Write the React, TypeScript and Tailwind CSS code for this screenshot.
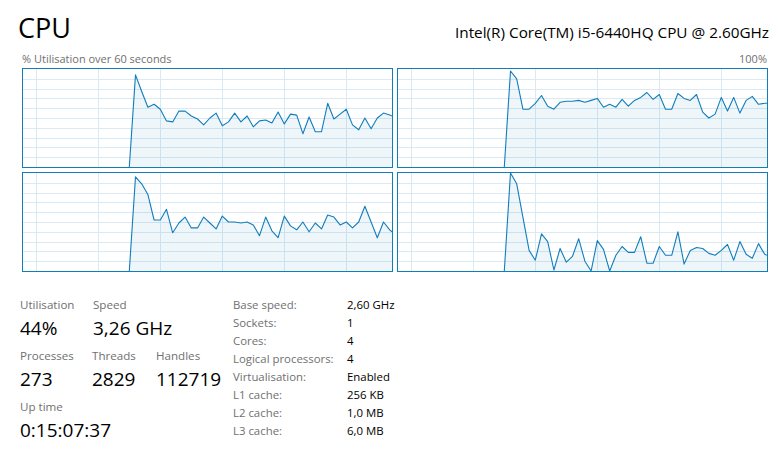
const CORES: number[][] = [
  [0, 94, 77, 61, 64, 59, 47, 46, 57, 57, 52, 49, 43, 50, 55, 42, 46, 55, 46, 52, 41, 47, 48, 45, 56, 44, 54, 53, 34, 51, 36, 36, 65, 49, 54, 59, 43, 38, 50, 39, 50, 55, 53, 52],
  [0, 98, 90, 59, 59, 65, 73, 62, 59, 66, 67, 67, 68, 66, 68, 70, 61, 64, 61, 69, 62, 68, 71, 76, 69, 74, 59, 59, 75, 70, 68, 74, 56, 50, 54, 71, 57, 71, 55, 68, 72, 64, 65, 65],
  [0, 96, 89, 78, 52, 52, 63, 39, 49, 55, 44, 44, 55, 49, 43, 56, 50, 50, 49, 50, 47, 36, 55, 41, 34, 56, 46, 42, 50, 40, 49, 43, 57, 55, 47, 50, 44, 50, 66, 50, 34, 50, 42, 40],
  [0, 100, 89, 55, 21, 11, 38, 30, 1, 23, 9, 15, 33, 10, 0, 31, 22, 0, 16, 25, 19, 19, 35, 8, 8, 25, 16, 16, 40, 7, 21, 24, 23, 18, 16, 21, 27, 11, 30, 17, 13, 28, 17, 16],
];

const GRID_X = [0, 1, 2, 3, 4, 5].map((i) => 12.5 + i * 62.1);
const GRID_Y = [1, 2, 3, 4, 5, 6, 7, 8, 9].map((i) => i * 9.8);

const SPECS = [
  ['Base speed:', '2,60 GHz'],
  ['Sockets:', '1'],
  ['Cores:', '4'],
  ['Logical processors:', '4'],
  ['Virtualisation:', 'Enabled'],
  ['L1 cache:', '256 KB'],
  ['L2 cache:', '1,0 MB'],
  ['L3 cache:', '6,0 MB'],
];

function CoreGraph({ data }: { data: number[] }) {
  const pts = data.map((v, i) => [Math.min(106.3 + i * 6.2, 369), 98 - v * 0.98]);
  const line = pts.map(([x, y], i) => `${i ? 'L' : 'M'}${x.toFixed(1)} ${y.toFixed(1)}`).join(' ');
  const area = `${line} L369 98 L${pts[0][0]} 98 Z`;

  return (
    <div className="h-[100px] w-[371px] border border-[#117dbb] bg-white">
      <svg width="369" height="98" className="block">
        {GRID_Y.map((y) => (
          <line key={`h${y}`} x1="0" x2="369" y1={Math.round(y) + 0.5} y2={Math.round(y) + 0.5} stroke="#d9eaf4" strokeWidth="1" />
        ))}
        {GRID_X.map((x) => (
          <line key={`v${x}`} y1="0" y2="98" x1={Math.round(x) + 0.5} x2={Math.round(x) + 0.5} stroke="#d9eaf4" strokeWidth="1" />
        ))}
        <path d={area} fill="#117dbb" fillOpacity="0.07" />
        <path d={line} fill="none" stroke="#117dbb" strokeWidth="1.1" strokeLinejoin="round" />
      </svg>
    </div>
  );
}

function Stat({ label, value, width }: { label: string; value: string; width: string }) {
  return (
    <div className={width}>
      <div className="text-[11.6px] leading-[18px] text-[#707070]">{label}</div>
      <div className="mt-[2px] text-[19px] leading-[24px] text-black">{value}</div>
    </div>
  );
}

export default function App() {
  return (
    <div className="h-[467px] w-[778px] overflow-hidden bg-white font-['Segoe_UI','Open_Sans',sans-serif]">
      {/* Header */}
      <div className="flex items-baseline justify-between pl-[18px] pr-[9px] pt-[10px]">
        <h1 className="text-[27px] leading-[36px] text-black">CPU</h1>
        <span className="text-[15.3px] leading-[20px] text-black">Intel(R) Core(TM) i5-6440HQ CPU @ 2.60GHz</span>
      </div>

      <div className="ml-[22px] w-[745px]">
        <div className="mt-[6px] flex justify-between text-[11px] leading-[14px] text-[#707070]">
          <span>% Utilisation over 60 seconds</span>
          <span>100%</span>
        </div>

        {/* Per-core graphs */}
        <div className="mt-[2px] grid grid-cols-[371px_371px] gap-[4px]">
          {CORES.map((core, i) => (
            <CoreGraph key={i} data={core} />
          ))}
        </div>
      </div>

      {/* Stats */}
      <div className="mt-[24px] flex pl-[20px]">
        <div className="flex w-[213px] flex-col gap-[7px]">
          <div className="flex">
            <Stat label="Utilisation" value="44%" width="w-[73px]" />
            <Stat label="Speed" value="3,26 GHz" width="w-[100px]" />
          </div>
          <div className="flex">
            <Stat label="Processes" value="273" width="w-[72px]" />
            <Stat label="Threads" value="2829" width="w-[64px]" />
            <Stat label="Handles" value="112719" width="w-[70px]" />
          </div>
          <Stat label="Up time" value="0:15:07:37" width="w-[120px]" />
        </div>

        <div className="flex flex-col text-[11.4px] leading-[18px]">
          {SPECS.map(([k, v]) => (
            <div key={k} className="flex">
              <span className="w-[114px] text-[#707070]">{k}</span>
              <span className="text-black">{v}</span>
            </div>
          ))}
        </div>
      </div>
    </div>
  );
}
